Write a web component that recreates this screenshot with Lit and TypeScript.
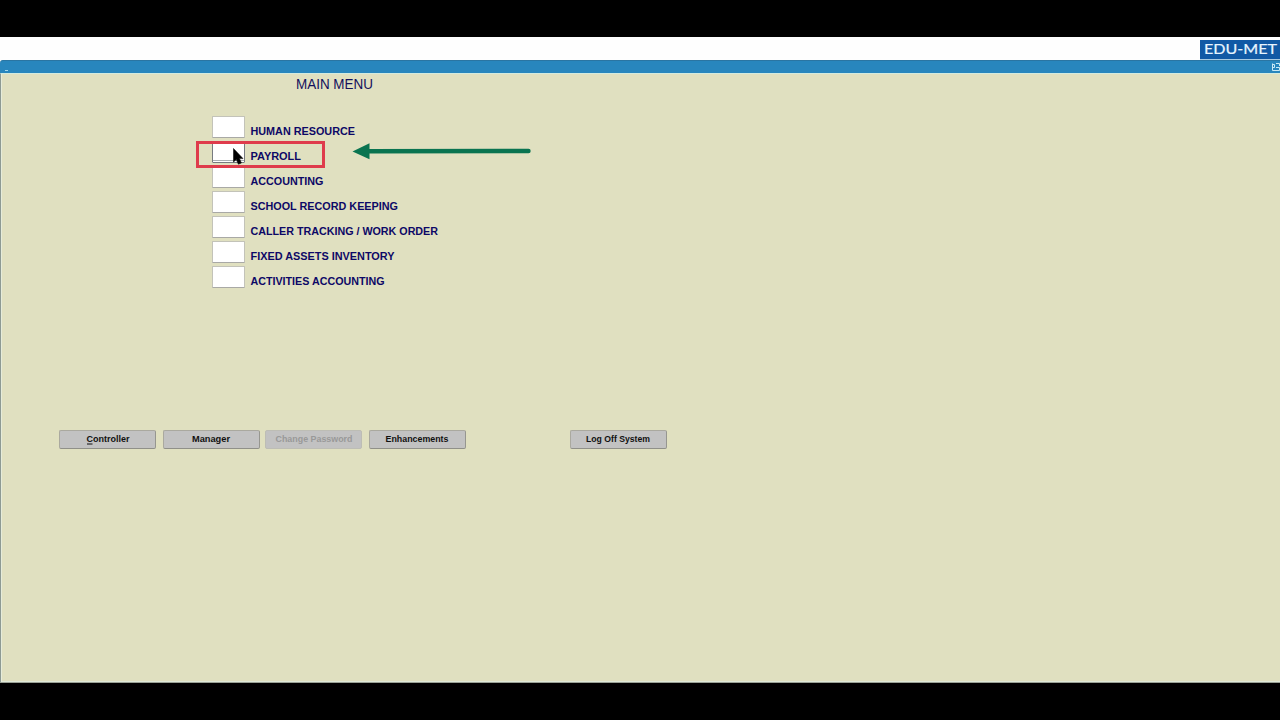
import { LitElement, html, css } from "lit";
import { customElement } from "lit/decorators.js";
import { classMap } from "lit/directives/class-map.js";

const MENU = [
  { name: "HUMAN RESOURCE", width: 104.5 },
  { name: "PAYROLL", width: 50.5 },
  { name: "ACCOUNTING", width: 73 },
  { name: "SCHOOL RECORD KEEPING", width: 147.5 },
  { name: "CALLER TRACKING / WORK ORDER", width: 187.5 },
  { name: "FIXED ASSETS INVENTORY", width: 144 },
  { name: "ACTIVITIES ACCOUNTING", width: 134 },
];

const ACTIONS = [
  { name: "Controller", width: 43, key: true },
  { name: "Manager", width: 38 },
  { name: "Change Password", width: 77, disabled: true },
  { name: "Enhancements", width: 63 },
  { name: "Log Off System", width: 64, last: true },
];

@customElement("app-root")
export class AppRoot extends LitElement {
  static styles = css`
    :host {
      display: flex;
      flex-direction: column;
      position: relative;
      box-sizing: border-box;
      width: 1280px;
      height: 720px;
      padding: 37px 0;
      overflow: hidden;
      background: #000;
      font-family: "Liberation Sans", Arial, sans-serif;
    }
    svg {
      display: block;
      overflow: visible;
    }
    .top {
      display: flex;
      justify-content: flex-end;
      align-items: flex-end;
      height: 23px;
      background: #fefefe;
    }
    .logo {
      box-sizing: border-box;
      width: 80px;
      height: 20px;
      background: #1159a5;
      border-bottom: 1px solid #a9cbe2;
    }
    .logo text {
      font-family: Lato, sans-serif;
      font-size: 14px;
      fill: #e8f5ff;
      stroke: #e8f5ff;
      stroke-width: 0.2px;
    }
    .frame {
      background: #fefefe;
    }
    .bar {
      display: flex;
      justify-content: space-between;
      align-items: center;
      box-sizing: border-box;
      height: 13px;
      padding-left: 5px;
      background: #2886bd;
      border-top: 1px solid #2a75a2;
      border-top-left-radius: 3px;
    }
    .minimize {
      width: 3px;
      height: 1px;
      margin-top: 7px;
      background: #a2d9ee;
    }
    .body {
      flex: 1;
      box-sizing: border-box;
      border-left: 1px solid #8d9a93;
      border-top: 1px solid #d3ebdf;
      border-bottom: 1px solid #9aa195;
      background: #e0e0c0;
      box-shadow: inset 1px 0 0 #e6ecda, inset 0 -1px 0 #dfe9d8;
    }
    .title {
      padding: 2px 0 0 295px;
      height: 41px;
      box-sizing: border-box;
      font-size: 14px;
      fill: #13105c;
    }
    .menu {
      display: grid;
      grid-auto-rows: 24.9px;
      margin: 1.4px 0 0 210.7px;
    }
    .row {
      display: flex;
      gap: 5.6px;
    }
    .box {
      box-sizing: border-box;
      width: 33px;
      height: 22px;
      background: #fff;
      border: 1px solid #c3c3b9;
      border-bottom-color: #a9a9a6;
      border-radius: 1px;
    }
    .box.active {
      border-color: #777b80;
      box-shadow: inset 0 -1px 0 #fff, inset 0 -2px 0 #a9b0b3;
    }
    .label {
      padding-top: 8px;
      font-size: 11.6px;
      font-weight: bold;
      fill: #0d0866;
    }
    .actions {
      display: flex;
      gap: 6.4px;
      margin: 139px 0 0 58.2px;
    }
    .button {
      display: flex;
      justify-content: center;
      box-sizing: border-box;
      width: 97px;
      height: 19px;
      background: #c2c2c2;
      border: 1px solid #aaa99f;
      border-right-color: #96968f;
      border-bottom-color: #909089;
      border-radius: 2px;
      font-size: 9.7px;
      font-weight: bold;
      fill: #111;
    }
    .button.disabled {
      margin-left: -0.6px;
      fill: #999;
      border-color: #bdbdb5;
    }
    .button.last {
      margin-left: 97.8px;
    }
    .highlight {
      position: absolute;
      left: 196px;
      top: 141px;
      box-sizing: border-box;
      width: 129px;
      height: 27px;
      border: 3px solid #df3c4c;
    }
    .cursor {
      position: absolute;
      left: 232px;
      top: 148px;
    }
    .arrow {
      position: absolute;
      left: 350px;
      top: 140px;
    }
  `;

  render() {
    return html`
      <div class="top">
        <div class="logo">
          <svg width="80" height="19" viewBox="0 0 80 19">
            <text x="4" y="14.300" textLength="73" lengthAdjust="spacingAndGlyphs">EDU-MET</text>
          </svg>
        </div>
      </div>
      <div class="frame">
        <div class="bar">
          <span class="minimize"></span>
          <svg width="9" height="9" viewBox="0 0 9 9" fill="none" stroke="#c9e9f5">
            <path d="M1.5 .5V7.5H8.5V4.5H5M1.5 1.5H3.5V4.5H1.5M5 .5H8.5V3" />
          </svg>
        </div>
      </div>
      <div class="body">
        <div class="title">
          <svg width="80" height="16">
            <text x="0" y="13" textLength="77" lengthAdjust="spacingAndGlyphs">MAIN MENU</text>
          </svg>
        </div>
        <div class="menu">
          ${MENU.map(
            ({ name, width }) => html`<div class="row">
              <div class=${classMap({ box: true, active: name === "PAYROLL" })}></div>
              <div class="label">
                <svg width="200" height="15">
                  <text x="0.5" y="11.4" textLength=${width} lengthAdjust="spacingAndGlyphs">${name}</text>
                </svg>
              </div>
            </div>`
          )}
        </div>
        <div class="actions">
          ${ACTIONS.map(
            ({ name, width, key, disabled, last }) => html`<div
              class=${classMap({ button: true, disabled: !!disabled, last: !!last })}
            >
              <svg width="92" height="17">
                <text x="46" y="11.3" text-anchor="middle" textLength=${width} lengthAdjust="spacingAndGlyphs">${name}</text>
                <rect x="25" y="12.5" width=${key ? 5.5 : 0} height="1" />
              </svg>
            </div>`
          )}
        </div>
      </div>
      <div class="highlight"></div>
      <div class="cursor">
        <svg width="12" height="18" viewBox="0 0 12 18">
          <path d="M1.5 .5V14L4.300 11.600L6.400 16.200L9.400 15L7.500 10.600H11Z" fill="#000" stroke="#111" stroke-width=".6" />
        </svg>
      </div>
      <div class="arrow">
        <svg width="184" height="24" viewBox="0 0 184 24">
          <path d="M18 11.3L178.500 11" stroke="#0a7450" stroke-width="4.400" stroke-linecap="round" />
          <path d="M2.500 11.500L19.500 3.300V19.300Z" fill="#0a7450" />
        </svg>
      </div>
    `;
  }
}
